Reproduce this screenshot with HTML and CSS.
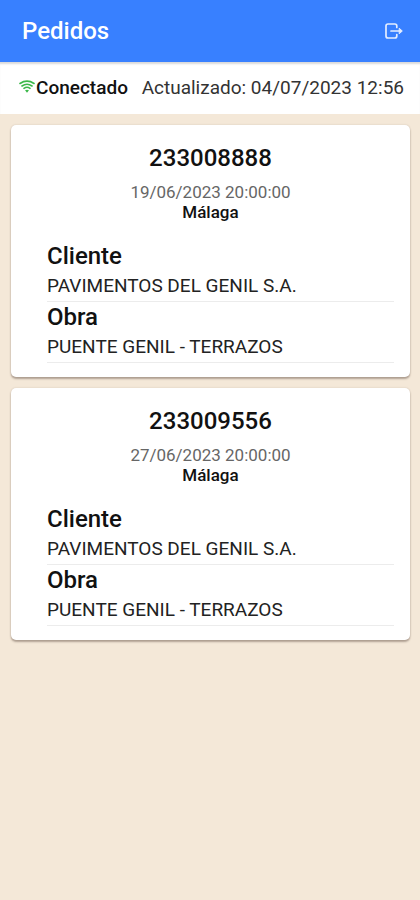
FILE: index.html
```html
<!DOCTYPE html>
<html lang="es">
	<head>
		<meta charset="utf-8">
		<meta name="viewport" content="width=device-width, initial-scale=1">
		<title>Pedidos</title>
		<link rel="stylesheet" href="styles.css">
	</head>
	<body>
		<header class="toolbar">
			<h1>Pedidos</h1>
			<button type="button" class="logout" aria-label="Salir">
				<svg viewBox="0 0 20 18" width="20" height="18">
					<path d="M12.8 5.5V4a2 2 0 0 0-2-2H4a2 2 0 0 0-2 2v10a2 2 0 0 0 2 2h6.800a2 2 0 0 0 2-2V12.500M7 9h9"/>
					<path class="tip" d="M15.500 6.500L18.300 9l-2.800 2.500z"/>
				</svg>
			</button>
		</header>

		<div class="status">
			<svg class="wifi" viewBox="0 0 16 14" width="16" height="14">
				<path d="M1 3.500Q8-1.200 15 3.500M3 6Q8 2.400 13 6M5 8.400Q8 6.200 11 8.400"/>
				<path class="dot" d="M6 10.300Q8 9 10 10.300L8 12.800z"/>
			</svg>
			<strong>Conectado</strong>
			<span class="updated">Actualizado: 04/07/2023 12:56</span>
		</div>

		<main class="orders">
			<article class="card">
				<h2>233008888</h2>
				<p class="date">19/06/2023 20:00:00</p>
				<p class="city">Málaga</p>
				<dl>
					<dt>Cliente</dt>
					<dd>PAVIMENTOS DEL GENIL S.A.</dd>
					<dt>Obra</dt>
					<dd>PUENTE GENIL - TERRAZOS</dd>
				</dl>
			</article>

			<article class="card">
				<h2>233009556</h2>
				<p class="date">27/06/2023 20:00:00</p>
				<p class="city">Málaga</p>
				<dl>
					<dt>Cliente</dt>
					<dd>PAVIMENTOS DEL GENIL S.A.</dd>
					<dt>Obra</dt>
					<dd>PUENTE GENIL - TERRAZOS</dd>
				</dl>
			</article>
		</main>
	</body>
</html>
```
FILE: styles.css
```css
* {
	box-sizing: border-box;
}

body {
	margin: 0;
	background-color: #f4e8d8;
	color: #111;
	font-family: Roboto, sans-serif;
	font-size: 19px;
}

h1, h2, p, dl, dd {
	margin: 0;
}

/* Top bar */
.toolbar {
	display: flex;
	align-items: center;
	justify-content: space-between;
	height: 62px;
	padding: 0 16px 0 22px;
	background-color: #3880ff;
	color: white;
}

.toolbar h1 {
	font-size: 24px;
	font-weight: 500;
}

.logout {
	display: flex;
	padding: 0;
	border: 0;
	background: none;
	color: inherit;
	cursor: pointer;
}

.logout svg {
	fill: none;
	stroke: #e4edff;
	stroke-width: 1.7;
	stroke-linecap: round;
	stroke-linejoin: round;
}

.logout .tip {
	fill: #e4edff;
	stroke-width: 1;
}

/* Connection status */
.status {
	display: flex;
	align-items: center;
	height: 52px;
	padding: 0 16px 2px 19px;
	background-color: white;
	box-shadow: inset 0 3px 2px -1px rgba(0, 0, 0, 0.15);
	white-space: nowrap;
}

.status strong {
	font-weight: 500;
}

.updated {
	margin-left: auto;
	color: #333;
}

.wifi {
	flex: none;
	margin-right: 1px;
}

.wifi path {
	fill: none;
	stroke: #3cb84a;
	stroke-width: 1.6;
	stroke-linecap: round;
}

.wifi .dot {
	fill: #3cb84a;
	stroke: none;
}

/* Order cards */
.orders {
	display: grid;
	gap: 11px;
	padding: 11px 10px 11px 11px;
}

.card {
	padding: 18px 16px 14px 36px;
	border-radius: 5px;
	background-color: white;
	box-shadow: 0 2px 2px rgba(80, 60, 50, 0.4), 0 0 2px rgba(80, 60, 50, 0.2);
}

.card h2,
.card p {
	margin-left: -20px;
	text-align: center;
}

.card h2 {
	margin-bottom: 9px;
	font-size: 24px;
	font-weight: 500;
	line-height: 30px;
}

.date {
	color: #666;
	font-size: 17px;
	line-height: 20px;
}

.city {
	font-size: 17px;
	font-weight: 500;
	line-height: 20px;
}

.card dl {
	margin-top: 19px;
}

.card dt {
	font-size: 24px;
	font-weight: 500;
	line-height: 30px;
}

.card dd {
	border-bottom: 1px solid #ececec;
	color: #222;
	line-height: 30px;
}
```
